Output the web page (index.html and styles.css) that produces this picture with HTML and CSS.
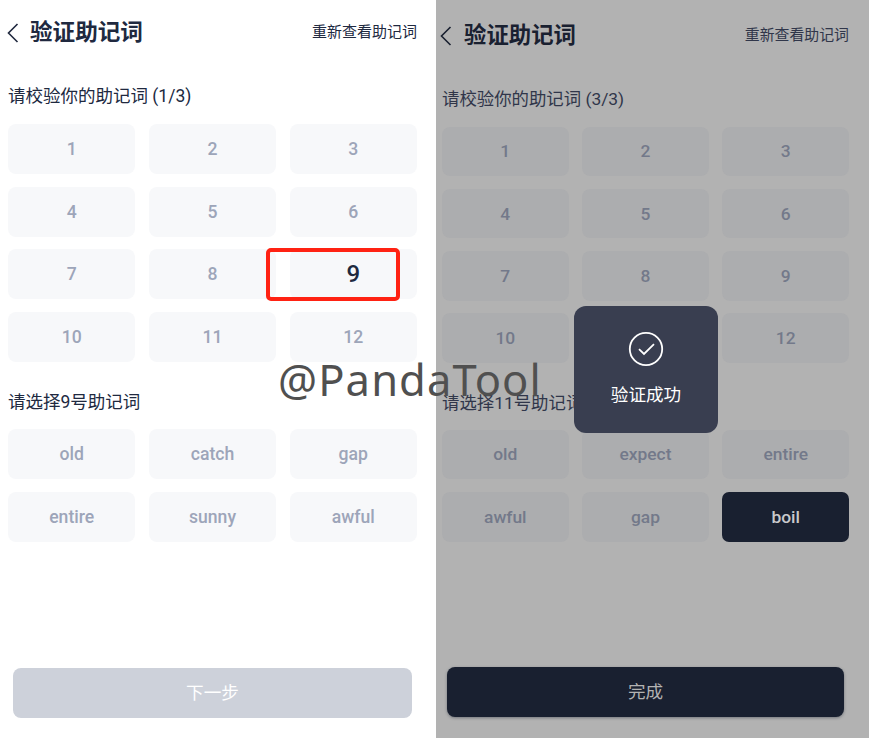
FILE: index.html
```html
<!DOCTYPE html>
<html lang="zh-CN">
<head>
<meta charset="utf-8">
<title>验证助记词</title>
<link rel="stylesheet" href="styles.css">
</head>
<body>
<main class="screens">
  <section class="screen">
    <header class="bar">
      <svg class="back" viewBox="0 0 12 20"><path d="M10.5 1 1.5 10l9 9"/></svg>
      <h1>验证助记词</h1>
      <a class="review">重新查看助记词</a>
    </header>
    <h2 class="label">请校验你的助记词 (1/3)</h2>
    <div class="grid">
      <div class="tile">1</div><div class="tile">2</div><div class="tile">3</div>
      <div class="tile">4</div><div class="tile">5</div><div class="tile">6</div>
      <div class="tile">7</div><div class="tile">8</div><div class="tile current">9<span class="marker"></span></div>
      <div class="tile">10</div><div class="tile">11</div><div class="tile">12</div>
    </div>
    <h2 class="label pick">请选择9号助记词</h2>
    <div class="grid">
      <div class="tile">old</div><div class="tile">catch</div><div class="tile">gap</div>
      <div class="tile">entire</div><div class="tile">sunny</div><div class="tile">awful</div>
    </div>
    <button class="submit">下一步</button>
  </section>
  <section class="screen dimmed">
    <header class="bar">
      <svg class="back" viewBox="0 0 12 20"><path d="M10.5 1 1.5 10l9 9"/></svg>
      <h1>验证助记词</h1>
      <a class="review">重新查看助记词</a>
    </header>
    <h2 class="label">请校验你的助记词 (3/3)</h2>
    <div class="grid">
      <div class="tile">1</div><div class="tile">2</div><div class="tile">3</div>
      <div class="tile">4</div><div class="tile">5</div><div class="tile">6</div>
      <div class="tile">7</div><div class="tile">8</div><div class="tile">9</div>
      <div class="tile">10</div><div class="tile"></div><div class="tile">12</div>
    </div>
    <h2 class="label pick">请选择11号助记词</h2>
    <div class="grid">
      <div class="tile">old</div><div class="tile">expect</div><div class="tile">entire</div>
      <div class="tile">awful</div><div class="tile">gap</div><div class="tile chosen">boil</div>
    </div>
    <button class="submit">完成</button>
    <div class="toast">
      <svg class="check" viewBox="0 0 36 36"><circle cx="18" cy="18" r="16.2"/><path d="m11 18.2 5 4.8 10-9.8"/></svg>
      <span>验证成功</span>
    </div>
  </section>
  <div class="watermark">@PandaTool</div>
</main>
</body>
</html>
```
FILE: styles.css
```css
* { box-sizing: border-box; }

body {
  margin: 0;
  font-family: Roboto, "Noto Sans CJK SC", sans-serif;
  color: #20293f;
  background: #fff;
}

.screens {
  position: relative;
  display: flex;
  width: 869px;
  height: 738px;
  overflow: hidden;
}

.screen {
  --tile: #f7f8fa;
  --tile-text: #9da5b9;
  position: relative;
  display: flex;
  flex-direction: column;
  width: 436px;
  height: 738px;
  padding: 17px 19px 20px 8px;
}

.bar {
  display: flex;
  align-items: center;
  height: 32px;
  margin-bottom: 31px;
}

.back {
  width: 12px;
  height: 20px;
  margin: 0 11px 0 -1px;
  fill: none;
  stroke: currentColor;
  stroke-width: 1.6;
}

h1 {
  margin: 0;
  font-size: 22.6px;
  line-height: 32px;
  font-weight: 700;
}

.review {
  margin: -2px 0 0 auto;
  font-size: 15px;
  line-height: 32px;
  font-weight: 400;
}

.label {
  height: 32px;
  margin: 0 0 12px;
  font-size: 17.5px;
  line-height: 32px;
  font-weight: 400;
  white-space: nowrap;
}

.grid {
  display: grid;
  grid-template-columns: repeat(3, 1fr);
  grid-auto-rows: 50px;
  gap: 12.7px 13.4px;
}

.pick { margin-top: 24px; margin-bottom: 11px; }

.tile {
  position: relative;
  display: flex;
  align-items: center;
  justify-content: center;
  border-radius: 8px;
  background: var(--tile);
  color: var(--tile-text);
  font-size: 17.6px;
  font-weight: 500;
}

.current { color: #20293f; font-size: 24px; }

.marker {
  position: absolute;
  top: -1.5px;
  left: -23.5px;
  width: 134px;
  height: 53px;
  border: 4px solid #ff2213;
  border-radius: 5px;
}

.submit {
  height: 50px;
  margin: auto 5px 0;
  padding: 0;
  border: 0;
  border-radius: 8px;
  background: #cdd1da;
  color: #fff;
  font: 400 17.6px/48px Roboto, "Noto Sans CJK SC", sans-serif;
}

.dimmed {
  --tile: #acadaf;
  --tile-text: #73798a;
  width: 433px;
  padding: 19px 20px 21px 6px;
  background: #b2b2b2;
  color: #192030;
}

.dimmed .bar { margin-bottom: 32px; }
.dimmed .back { margin: 2px 12px 0 -2px; }
.dimmed h1 { font-size: 22.4px; }
.dimmed .review { margin-top: -1px; font-size: 14.9px; }
.dimmed .label { margin-bottom: 11.5px; }
.dimmed .label, .dimmed .tile { font-size: 17.4px; }
.dimmed .grid { grid-auto-rows: 49.7px; gap: 12.6px 13.6px; }
.dimmed .pick { margin-top: 24px; margin-bottom: 10.5px; }
.dimmed .review, .dimmed .label { color: #30364a; }

.dimmed .chosen { background: #192030; color: #c8c9cb; border-radius: 7px; }

.dimmed .submit {
  background: #192030;
  color: #b2b2b2;
  box-shadow: 0 1px 3px rgba(25, 32, 48, .4);
}

.toast {
  position: absolute;
  top: 305.5px;
  left: 138px;
  display: flex;
  flex-direction: column;
  align-items: center;
  width: 144px;
  height: 127px;
  padding-top: 25px;
  border-radius: 12px;
  background: #393e50;
  color: #fff;
  font-size: 17.6px;
  line-height: 28px;
}

.check {
  width: 36px;
  height: 36px;
  margin-bottom: 14px;
  fill: none;
  stroke: #fff;
  stroke-width: 1.8;
}

.watermark {
  position: absolute;
  top: 349px;
  left: 278px;
  font-family: "Noto Sans", sans-serif;
  font-size: 43.5px;
  line-height: 60px;
  letter-spacing: 1.1px;
  color: #505050;
}
```
